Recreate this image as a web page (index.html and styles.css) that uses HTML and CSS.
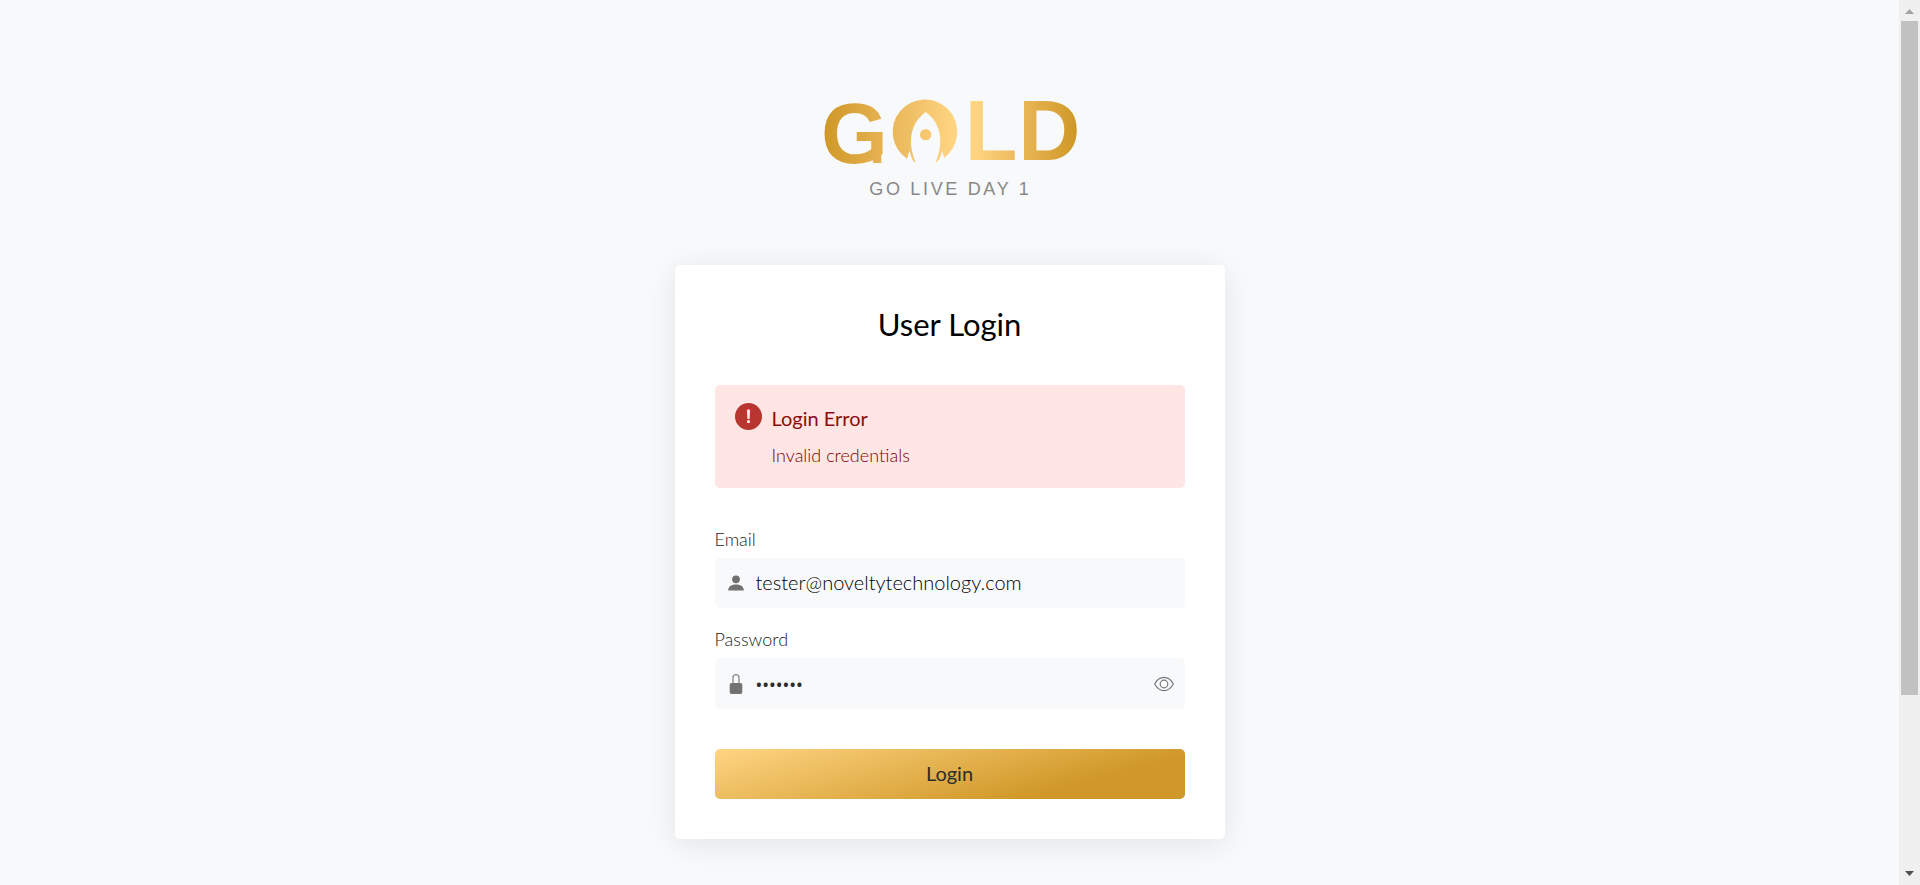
FILE: index.html
```
<!DOCTYPE html>
<html lang="en">
<head>
<meta charset="utf-8">
<meta name="viewport" content="width=device-width, initial-scale=1">
<title>User Login</title>
<link rel="stylesheet" href="styles.css">
</head>
<body>
<div class="window">
  <main class="page">
    <svg class="logo" viewBox="36 18 768 312" role="img" aria-label="GOLD – Go live day 1">
      <defs>
        <linearGradient id="gold" gradientUnits="userSpaceOnUse" x1="45" y1="140" x2="795" y2="160">
          <stop offset="0" stop-color="#d09828"/>
          <stop offset=".25" stop-color="#e8b556"/>
          <stop offset=".52" stop-color="#ffd583"/>
          <stop offset=".6" stop-color="#ffd583"/>
          <stop offset=".78" stop-color="#eab858"/>
          <stop offset="1" stop-color="#d09828"/>
        </linearGradient>
      </defs>
      <g fill="url(#gold)">
        <text class="logo-letter" x="33" y="219">G</text>
        <path d="M182 180H214V219H190L186 196z"/>
        <path d="M291 206A97 97 0 1 1 403 203L396 182Q390 212 376 218C395 180 406 108 347 66C289 108 299 180 318 218Q306 216 299 182Z"/>
        <circle cx="347" cy="134" r="17"/>
        <text class="logo-letter" x="464" y="210">L</text>
        <text class="logo-letter" x="625" y="210">D</text>
      </g>
      <text class="logo-tagline" x="178" y="314">GO LIVE DAY 1</text>
    </svg>

    <form class="card">
      <h1 class="card-title">User Login</h1>

      <div class="alert" role="alert">
        <svg class="alert-icon" viewBox="0 0 27 27" aria-hidden="true">
          <circle cx="13.500" cy="13.500" r="13.500" fill="#b93530"/>
          <path d="M11.900 7.800a1.600 1.600 0 0 1 3.200 0l-.4 7.200a1.200 1.200 0 0 1-2.400 0z" fill="#ffe6e4"/>
          <circle cx="13.500" cy="18.600" r="1.600" fill="#ffe6e4"/>
        </svg>
        <div class="alert-body">
          <strong class="alert-title">Login Error</strong>
          <p class="alert-text">Invalid credentials</p>
        </div>
      </div>

      <div class="group">
        <label class="label" for="email">Email</label>
        <div class="field">
          <svg class="field-icon" viewBox="0 0 20 20" aria-hidden="true">
            <circle cx="10" cy="6.300" r="3.900" fill="#727272"/>
            <path d="M2.200 17.500c0-4 3.200-6 7.800-6s7.800 2 7.800 6z" fill="#727272"/>
          </svg>
          <input class="input" id="email" type="email" value="tester@noveltytechnology.com">
        </div>
      </div>

      <div class="group">
        <label class="label" for="password">Password</label>
        <div class="field field-password">
          <svg class="field-icon" viewBox="0 0 20 20" aria-hidden="true">
            <path d="M7 9.500V3.700a3 3 0 0 1 6 0v5.800" fill="none" stroke="#8a8a8a" stroke-width="1.300"/>
            <rect x="3.700" y="9" width="12.600" height="11" rx="2" fill="#727272"/>
          </svg>
          <input class="input input-password" id="password" type="password" value="abcdefg">
          <button class="reveal" type="button" aria-label="Show password">
            <svg class="reveal-icon" viewBox="0 0 20 20" fill="none" stroke="#777" stroke-width="1.200" aria-hidden="true">
              <path d="M.7 10C3 5.700 6.200 3.400 10 3.400s7 2.300 9.300 6.600c-2.300 4.300-5.500 6.600-9.300 6.600S3 14.300.7 10z"/>
              <circle cx="10" cy="10" r="3.800"/>
            </svg>
          </button>
        </div>
      </div>

      <button class="submit" type="button">Login</button>
    </form>
  </main>

  <div class="scrollbar" aria-hidden="true">
    <svg class="scroll-arrow" viewBox="0 0 21 21"><path d="M6 14L10.500 9L15 14z" fill="#a3a3a3"/></svg>
    <div class="scroll-track"><div class="scroll-thumb"></div></div>
    <svg class="scroll-arrow" viewBox="0 0 21 21"><path d="M6 7L10.500 12L15 7z" fill="#505050"/></svg>
  </div>
</div>
</body>
</html>
```
FILE: styles.css
```
* {
  box-sizing: border-box;
}

body {
  margin: 0;
  background: #f8f9fb;
  color: #2d2d2d;
  font-family: Lato, "Open Sans", sans-serif;
  font-size: 18px;
  line-height: 24px;
}

.window {
  display: flex;
  height: 100vh;
  overflow: hidden;
}

.page {
  flex: 1;
  display: flex;
  flex-direction: column;
  align-items: center;
  padding: 96px 16px 46px;
}

.logo {
  flex: none;
  width: 256px;
  height: 104px;
  margin-bottom: 65px;
  overflow: visible;
}

.logo-letter {
  font: bold 258px "Liberation Sans", Arial, sans-serif;
}

.logo-tagline {
  fill: #888;
  font: 54px "Liberation Sans", Arial, sans-serif;
  letter-spacing: 8px;
}

.card {
  flex: none;
  width: 100%;
  max-width: 550px;
  padding: 40px;
  border-radius: 5px;
  background: #fff;
  box-shadow: 0 5px 30px rgba(0, 0, 0, .09);
}

.card-title {
  margin: 0 0 42px;
  color: #000;
  font-size: 31px;
  font-weight: 400;
  line-height: 38px;
  text-align: center;
}

.alert {
  display: flex;
  gap: 10px;
  margin-bottom: 39px;
  padding: 18px 20px 20px;
  border-radius: 5px;
  background: #ffe6e4;
  color: #8c0d0d;
}

.alert-icon {
  flex: none;
  width: 27px;
  height: 27px;
}

.alert-title {
  display: block;
  margin-bottom: 10px;
  font-size: 20px;
  font-weight: 400;
  line-height: 30px;
}

.alert-text {
  margin: 0;
  color: #7d0000;
  font-weight: 300;
  line-height: 25px;
}

.group {
  margin-bottom: 19px;
}

.label {
  display: block;
  margin-bottom: 7px;
  color: #222;
  font-weight: 300;
}

.field {
  display: flex;
  align-items: center;
  height: 50px;
  padding: 0 11px;
  border-radius: 5px;
  background: #f8f9fb;
}

.field-password {
  height: 51px;
}

.field-icon {
  flex: none;
  width: 20px;
  height: 20px;
}

.input {
  flex: 1;
  min-width: 0;
  height: 50px;
  padding: 0 10px 2px;
  border: 0;
  outline: 0;
  background: none;
  color: #000;
  font: 300 20px Lato, "Open Sans", sans-serif;
}

.input-password {
  padding-bottom: 0;
  color: #2d2d2d;
  font: 400 18px "Noto Sans", sans-serif;
}

.reveal {
  display: flex;
  padding: 0;
  border: 0;
  background: none;
}

.reveal-icon {
  width: 20px;
  height: 20px;
}

.submit {
  display: block;
  width: 100%;
  height: 50px;
  margin-top: 40px;
  padding: 0 0 2px;
  border: 0;
  border-radius: 5px;
  background: linear-gradient(165deg, #ffd583 0%, #d09828 75%);
  color: #2d2d2d;
  font: 400 20px Lato, "Open Sans", sans-serif;
}

.scrollbar {
  flex: none;
  display: flex;
  flex-direction: column;
  width: 21px;
  background: #f0f0f0;
}

.scroll-arrow {
  flex: none;
  width: 21px;
  height: 21px;
}

.scroll-track {
  flex: 1;
  padding: 0 2px;
}

.scroll-thumb {
  height: 80%;
  background: #c1c1c1;
}
```
